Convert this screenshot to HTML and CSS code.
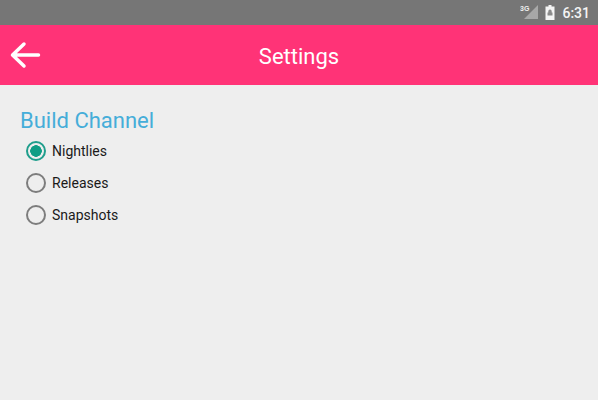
FILE: index.html
```html
<!DOCTYPE html>
<html lang="en">
<head>
<meta charset="utf-8">
<title>Settings</title>
<link rel="stylesheet" href="styles.css">
</head>
<body>
<div class="status">
  <svg class="signal" width="18" height="16" viewBox="0 0 18 16">
    <path d="M18 1V15H4Z" fill="#a8a8a8"/>
    <text x="0" y="7" class="net">3G</text>
  </svg>
  <svg class="battery" width="10" height="15" viewBox="0 0 10 15">
    <path d="M3.500 0h3v1.500H9.500V15H.5V1.500h3Z" fill="#f4f4f4"/>
    <path d="M5 4.500a1.700 1.700 0 0 1 1.700 1.700V7.500H7.500v3h-5v-3h.8V6.200A1.700 1.700 0 0 1 5 4.500Z" fill="#8a8a8a"/>
  </svg>
  <span class="time">6:31</span>
</div>
<header class="bar">
  <svg class="back" width="32" height="30" viewBox="0 0 32 30">
    <path d="M29.500 15H4M15 4 3.500 15 15 26" fill="none" stroke="#fff" stroke-width="3.500" stroke-linecap="round" stroke-linejoin="round"/>
  </svg>
  <h1 class="title">Settings</h1>
</header>
<main class="content">
  <h2 class="section">Build Channel</h2>
  <div class="options">
    <div class="option"><span class="radio on"></span><span class="label">Nightlies</span></div>
    <div class="option"><span class="radio"></span><span class="label">Releases</span></div>
    <div class="option"><span class="radio"></span><span class="label">Snapshots</span></div>
  </div>
</main>
</body>
</html>
```
FILE: styles.css
```css
* { box-sizing: border-box; }
html, body { margin: 0; height: 100%; }
body {
  width: 598px;
  height: 400px;
  overflow: hidden;
  background: #eeeeee;
  font-family: Roboto, "Liberation Sans", sans-serif;
  display: flex;
  flex-direction: column;
}
.status {
  height: 25px;
  flex: none;
  background: #767676;
  display: flex;
  align-items: center;
  justify-content: flex-end;
  padding-right: 8px;
}
.signal { margin-right: 7px; margin-top: -2px; }
.net { font: 700 7px "Liberation Sans", sans-serif; fill: #eee; }
.battery { margin-right: 7px; }
.time { color: #f4f4f4; font-size: 14px; font-weight: 500; }
.bar {
  height: 60px;
  flex: none;
  background: #ff3377;
  position: relative;
  display: flex;
  align-items: center;
  justify-content: center;
}
.back { position: absolute; left: 9px; top: 15px; }
.title { margin: 2px 0 0; color: #fff; font-size: 22px; font-weight: 400; }
.content { flex: 1; padding: 24px 20px 0; }
.section {
  margin: 0;
  color: #45add9;
  font-size: 22px;
  line-height: 24px;
  font-weight: 400;
}
.options { display: flex; flex-direction: column; margin-top: 2px; padding-left: 6px; }
.option { height: 32px; display: flex; align-items: center; gap: 6px; }
.radio {
  width: 20px;
  height: 20px;
  border-radius: 50%;
  border: 2px solid #7d7d7d;
  flex: none;
}
.radio.on {
  border-color: #1f9e8c;
  background: radial-gradient(circle, #0f9d85 0 5.500px, transparent 6px);
}
.label { color: #1a1a1a; font-size: 14px; }
```
